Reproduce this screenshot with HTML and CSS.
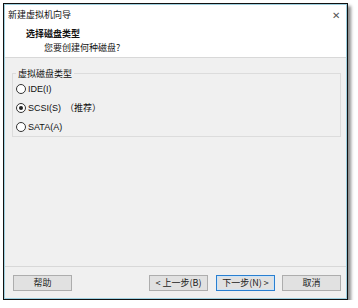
FILE: index.html
```html
<!DOCTYPE html>
<html lang="zh-CN">
<head>
    <meta charset="UTF-8">
    <title>新建虚拟机向导</title>
    <link rel="stylesheet" href="styles.css">
</head>
<body>
    <div class="window">
        <div class="titlebar">
            <span class="title">新建虚拟机向导</span>
            <span class="close">&#x2715;</span>
        </div>
        <div class="header">
            <div class="header-title">选择磁盘类型</div>
            <div class="header-sub">您要创建何种磁盘?</div>
        </div>
        <div class="content">
            <fieldset class="groupbox">
                <legend>虚拟磁盘类型</legend>
                <label class="radio"><span class="dot"></span>IDE(I)</label>
                <label class="radio checked"><span class="dot"></span>SCSI(S)<span class="note">（推荐）</span></label>
                <label class="radio"><span class="dot"></span>SATA(A)</label>
            </fieldset>
        </div>
        <div class="footer">
            <button class="btn">帮助</button>
            <div class="spacer"></div>
            <button class="btn">&lt; 上一步(B)</button>
            <button class="btn primary">下一步(N) &gt;</button>
            <button class="btn cancel">取消</button>
        </div>
    </div>
</body>
</html>
```

FILE: styles.css
```css
body {
    margin: 0;
    background-color: white;
    font-family: "Noto Sans CJK SC", "Liberation Sans", sans-serif;
    font-size: 9px;
    color: #111;
}
.window {
    margin: 3px 0 0 3px;
    width: 345px;
    height: 297px;
    box-sizing: border-box;
    border: 1px solid #111;
    box-shadow: inset 0 0 0 1px #9fd0e0, 3px 3px 3px rgba(0,0,0,0.45);
    background-color: #f0f0f0;
    display: flex;
    flex-direction: column;
    padding: 1px;
}
.titlebar {
    height: 18px;
    background-color: white;
    display: flex;
    align-items: center;
    justify-content: space-between;
    padding: 0 6px 0 3px;
}
.close {
    font-size: 10px;
    color: #555;
}
.header {
    height: 34px;
    background-color: white;
    border-bottom: 1px solid #d8d8d8;
    padding-left: 21px;
}
.header-title {
    font-weight: bold;
    margin-top: 4px;
}
.header-sub {
    margin-left: 18px;
    margin-top: 1px;
}
.content {
    flex: 1;
    padding: 9px 5px 0 7px;
}
.groupbox {
    margin: 0;
    border: 1px solid #dcdcdc;
    padding: 2px 0 3px 3px;
    display: flex;
    flex-direction: column;
    gap: 6px;
}
.groupbox legend {
    padding: 0 2px;
    margin-left: 0;
}
.radio {
    display: flex;
    align-items: center;
    font-family: "Liberation Sans", "Noto Sans CJK SC", sans-serif;
    height: 13px;
}
.dot {
    width: 8px;
    height: 8px;
    border: 1px solid #333;
    border-radius: 50%;
    background: white;
    margin-right: 2px;
    position: relative;
}
.checked .dot::after {
    content: "";
    position: absolute;
    left: 2px;
    top: 2px;
    width: 4px;
    height: 4px;
    border-radius: 50%;
    background: #222;
}
.note {
    font-family: "Noto Sans CJK SC", sans-serif;
    margin-left: 4px;
}
.footer {
    height: 31px;
    border-top: 1px solid #d8d8d8;
    display: flex;
    align-items: center;
    padding: 0 5px 0 8px;
    gap: 8px;
}
.spacer {
    flex: 1;
}
.btn {
    width: 59px;
    height: 16px;
    padding: 0;
    font-family: "Noto Sans CJK SC", "Liberation Sans", sans-serif;
    font-size: 9px;
    color: #222;
    background-color: #e1e1e1;
    border: 1px solid #adadad;
}
.btn.primary {
    border: 1px solid #2a7fd0;
    box-shadow: inset 0 0 0 1px #cde4f7;
}
.btn.cancel {
    margin-left: -1px;
}
```
